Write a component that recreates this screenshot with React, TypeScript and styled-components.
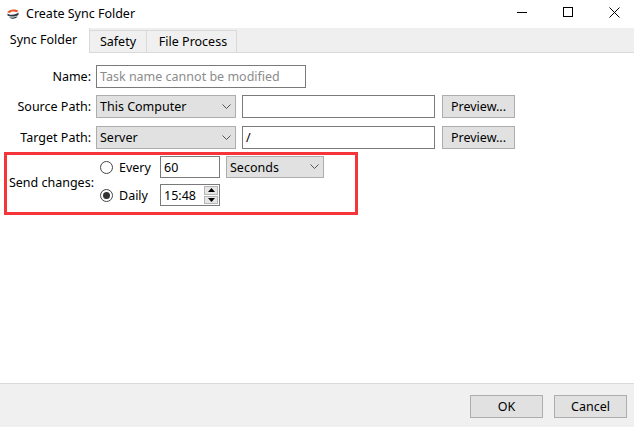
import React from 'react';
import styled, { createGlobalStyle } from 'styled-components';

const GlobalStyle = createGlobalStyle`
  html, body { margin: 0; padding: 0; background: #ffffff; }
  * { box-sizing: border-box; }
`;

const Window = styled.div`
  display: flex;
  flex-direction: column;
  width: 634px;
  height: 427px;
  background: #ffffff;
  color: #000000;
  font-family: "Noto Sans", "Open Sans", sans-serif;
  font-size: 12.5px;
  overflow: hidden;
`;

const TitleBar = styled.div`
  display: flex;
  align-items: center;
  height: 28px;
  padding-left: 7px;
  flex-shrink: 0;
`;

const TitleText = styled.span`
  margin-left: 7px;
  font-size: 12.5px;
  position: relative;
  top: -1px;
`;

const WindowButtons = styled.div`
  display: flex;
  margin-left: auto;
  margin-right: -3px;
  height: 100%;
  align-items: center;
`;

const WindowButton = styled.div`
  width: 46px;
  height: 100%;
  display: flex;
  align-items: center;
  justify-content: center;
  position: relative;
  top: -2px;
`;

const TabStrip = styled.div`
  display: flex;
  align-items: flex-end;
  height: 25px;
  flex-shrink: 0;
  background: #efefef;
  border-bottom: 1px solid #d9d9d9;
`;

const Tab = styled.div<{ $active?: boolean; $width: number; $shift?: number }>`
  display: flex;
  align-items: center;
  justify-content: center;
  width: ${p => p.$width}px;
  height: ${p => (p.$active ? 25 : 22)}px;
  margin-bottom: ${p => (p.$active ? -1 : 0)}px;
  padding-bottom: ${p => (p.$active ? 3 : 0)}px;
  padding-left: ${p => p.$shift ?? 0}px;
  padding-right: ${p => (p.$active ? 2 : 0)}px;
  background: ${p => (p.$active ? '#ffffff' : '#f0f0f0')};
  border-right: 1px solid #d9d9d9;
  border-top: ${p => (p.$active ? 'none' : '1px solid #d9d9d9')};
`;

const Form = styled.div`
  flex: 1;
  display: flex;
  flex-direction: column;
  padding-top: 12px;
`;

const Row = styled.div<{ $mt?: number }>`
  display: flex;
  align-items: center;
  height: 23px;
  margin-top: ${p => p.$mt ?? 0}px;
`;

const Label = styled.label`
  width: 91px;
  margin-right: 5px;
  text-align: right;
  flex-shrink: 0;
  white-space: nowrap;
`;

const TextBox = styled.div<{ $width: number; $muted?: boolean }>`
  width: ${p => p.$width}px;
  height: 100%;
  display: flex;
  align-items: center;
  padding-left: 3px;
  border: 1px solid #7a7a7a;
  background: #ffffff;
  color: ${p => (p.$muted ? '#8c8c8c' : '#000000')};
  white-space: nowrap;
`;

const Select = styled.div<{ $width: number; $ml?: number }>`
  width: ${p => p.$width}px;
  height: 100%;
  display: flex;
  align-items: center;
  justify-content: space-between;
  padding: 0 4px 0 3px;
  margin-left: ${p => p.$ml ?? 0}px;
  margin-right: 6px;
  background: #e1e1e1;
  border: 1px solid #adadad;
`;

const PushButton = styled.div`
  width: 73px;
  height: 23px;
  display: flex;
  align-items: center;
  justify-content: center;
  background: #e1e1e1;
  border: 1px solid #adadad;
`;

const PreviewButton = styled(PushButton)`
  margin-left: 7px;
`;

const SendGroup = styled.div`
  position: relative;
  display: flex;
  align-items: center;
  height: 50px;
  margin-top: 7px;
`;

const Highlight = styled.div`
  position: absolute;
  left: 4px;
  top: -4px;
  width: 354px;
  height: 63px;
  border: 3px solid #f5353a;
  pointer-events: none;
`;

const SendLabel = styled(Label)`
  width: 94px;
  margin-right: 0;
  padding-top: 3px;
`;

const ScheduleColumn = styled.div`
  display: flex;
  flex-direction: column;
  gap: 6px;
  margin-left: 6px;
`;

const ScheduleRow = styled.div`
  display: flex;
  align-items: center;
  height: 22px;
`;

const RadioLabel = styled.span`
  width: 41px;
  margin-left: 6px;
`;

const Radio = styled.span<{ $checked?: boolean }>`
  width: 13px;
  height: 13px;
  border-radius: 50%;
  border: 1px solid #444444;
  background: #ffffff;
  display: flex;
  align-items: center;
  justify-content: center;
  flex-shrink: 0;
  &::after {
    content: '';
    display: ${p => (p.$checked ? 'block' : 'none')};
    width: 7px;
    height: 7px;
    border-radius: 50%;
    background: #333333;
  }
`;

const SpinBox = styled(TextBox)`
  padding-right: 0;
`;

const SpinButtons = styled.div`
  margin-left: auto;
  width: 15px;
  height: 100%;
  display: flex;
  flex-direction: column;
  gap: 1px;
  padding: 1px 1px 1px 0;
`;

const SpinButton = styled.div`
  flex: 1;
  display: flex;
  align-items: center;
  justify-content: center;
  background: #e6e6e6;
  border: 1px solid #b5b5b5;
`;

const Footer = styled.div`
  display: flex;
  justify-content: flex-end;
  gap: 11px;
  height: 44px;
  flex-shrink: 0;
  padding: 11px 7px 0 0;
  background: #f0f0f0;
  border-top: 1px solid #d9d9d9;
`;

function AppLogo() {
  return (
    <svg width="12" height="12" viewBox="0 0 12 12">
      <path d="M0.5 4.5 C1 1 10 0.5 11.5 3 L9.5 4.2 C7 3.2 4 3.4 3 5 Z" fill="#e8562e" />
      <path d="M0.5 5.5 C3 7.5 8 7 11.5 4.5 L11.5 7 C8 9 3 9 0.5 7.5 Z" fill="#2f3a45" />
      <path d="M2 9 C5 10 8 9.5 10.5 8 C10 11 4 12 2 9 Z" fill="#2f3a45" />
    </svg>
  );
}

function Chevron() {
  return (
    <svg width="9" height="6" viewBox="0 0 9 6" fill="none" stroke="#555555" strokeWidth="1">
      <path d="M0.5 0.5 L4.5 4.5 L8.5 0.5" />
    </svg>
  );
}

function Arrow({ down }: { down?: boolean }) {
  return (
    <svg width="7" height="4" viewBox="0 0 7 4" fill="#000000">
      <path d={down ? 'M0 0 H7 L3.5 4 Z' : 'M0 4 H7 L3.5 0 Z'} />
    </svg>
  );
}

export default function App() {
  return (
    <Window>
      <GlobalStyle />
      <TitleBar>
        <AppLogo />
        <TitleText>Create Sync Folder</TitleText>
        <WindowButtons>
          <WindowButton>
            <svg width="10" height="10" viewBox="0 0 10 10" stroke="#000000" fill="none">
              <path d="M0 5.5 H10" />
            </svg>
          </WindowButton>
          <WindowButton>
            <svg width="10" height="10" viewBox="0 0 10 10" stroke="#000000" fill="none">
              <rect x="0.5" y="0.5" width="9" height="9" />
            </svg>
          </WindowButton>
          <WindowButton>
            <svg width="11" height="11" viewBox="0 0 11 11" stroke="#000000" fill="none">
              <path d="M0.5 0.5 L10.5 10.5 M10.5 0.5 L0.5 10.5" />
            </svg>
          </WindowButton>
        </WindowButtons>
      </TitleBar>
      <TabStrip>
        <Tab $active $width={90}>Sync Folder</Tab>
        <Tab $width={57}>Safety</Tab>
        <Tab $width={90} $shift={3}>File Process</Tab>
      </TabStrip>
      <Form>
        <Row>
          <Label>Name:</Label>
          <TextBox $width={210} $muted>Task name cannot be modified</TextBox>
        </Row>
        <Row $mt={7}>
          <Label>Source Path:</Label>
          <Select $width={140}>This Computer<Chevron /></Select>
          <TextBox $width={193} />
          <PreviewButton>Preview...</PreviewButton>
        </Row>
        <Row $mt={8}>
          <Label>Target Path:</Label>
          <Select $width={140}>Server<Chevron /></Select>
          <TextBox $width={193}>/</TextBox>
          <PreviewButton>Preview...</PreviewButton>
        </Row>
        <SendGroup>
          <SendLabel>Send changes:</SendLabel>
          <ScheduleColumn>
            <ScheduleRow>
              <Radio />
              <RadioLabel>Every</RadioLabel>
              <TextBox $width={60}>60</TextBox>
              <Select $width={98} $ml={6}>Seconds<Chevron /></Select>
            </ScheduleRow>
            <ScheduleRow>
              <Radio $checked />
              <RadioLabel>Daily</RadioLabel>
              <SpinBox $width={60}>
                15:48
                <SpinButtons>
                  <SpinButton><Arrow /></SpinButton>
                  <SpinButton><Arrow down /></SpinButton>
                </SpinButtons>
              </SpinBox>
            </ScheduleRow>
          </ScheduleColumn>
          <Highlight />
        </SendGroup>
      </Form>
      <Footer>
        <PushButton>OK</PushButton>
        <PushButton>Cancel</PushButton>
      </Footer>
    </Window>
  );
}
